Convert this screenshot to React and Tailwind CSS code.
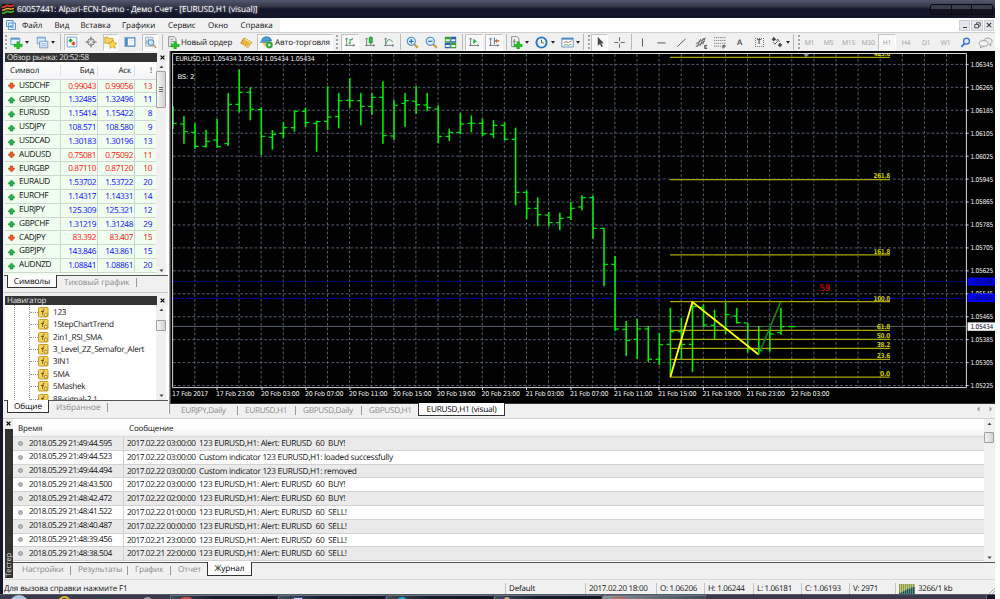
import React from "react";

const symbols = [
    ["USDCHF", "0.99043", "0.99056", "13", false],
    ["GBPUSD", "1.32485", "1.32496", "11", true],
    ["EURUSD", "1.15414", "1.15422", "8", true],
    ["USDJPY", "108.571", "108.580", "9", true],
    ["USDCAD", "1.30183", "1.30196", "13", true],
    ["AUDUSD", "0.75081", "0.75092", "11", false],
    ["EURGBP", "0.87110", "0.87120", "10", false],
    ["EURAUD", "1.53702", "1.53722", "20", true],
    ["EURCHF", "1.14317", "1.14331", "14", true],
    ["EURJPY", "125.309", "125.321", "12", true],
    ["GBPCHF", "1.31219", "1.31248", "29", true],
    ["CADJPY", "83.392", "83.407", "15", false],
    ["GBPJPY", "143.846", "143.861", "15", true],
    ["AUDNZD", "1.08841", "1.08861", "20", true],
];

const indicators = ["123", "1StepChartTrend", "2in1_RSI_SMA", "3_Level_ZZ_Semafor_Alert", "3IN1", "5MA", "5Mashek", "88-signal-2.1"];

const logs = [
    ["2018.05.29 21:49:44.595", "2017.02.22 03:00:00", "123 EURUSD,H1: Alert: EURUSD  60  BUY!"],
    ["2018.05.29 21:49:44.523", "2017.02.22 03:00:00", "Custom indicator 123 EURUSD,H1: loaded successfully"],
    ["2018.05.29 21:49:44.494", "2017.02.22 03:00:00", "Custom indicator 123 EURUSD,H1: removed"],
    ["2018.05.29 21:48:43.500", "2017.02.22 03:00:00", "123 EURUSD,H1: Alert: EURUSD  60  BUY!"],
    ["2018.05.29 21:48:42.472", "2017.02.22 02:00:00", "123 EURUSD,H1: Alert: EURUSD  60  BUY!"],
    ["2018.05.29 21:48:41.522", "2017.02.22 01:00:00", "123 EURUSD,H1: Alert: EURUSD  60  SELL!"],
    ["2018.05.29 21:48:40.487", "2017.02.22 00:00:00", "123 EURUSD,H1: Alert: EURUSD  60  SELL!"],
    ["2018.05.29 21:48:39.456", "2017.02.21 23:00:00", "123 EURUSD,H1: Alert: EURUSD  60  SELL!"],
    ["2018.05.29 21:48:38.504", "2017.02.21 22:00:00", "123 EURUSD,H1: Alert: EURUSD  60  SELL!"],
];

// high, low, open, close in thirds of a pixel below y=50
const bars = [
    [168, 237, null, 220], [198, 281, 222, 245], [220, 296, 247, 289], [239, 293, 289, 274], [207, 293, 270, 290],
    [129, 288, 281, 163], [59, 187, 163, 127], [112, 211, 127, 178], [172, 315, 179, 259], [240, 299, 262, 253],
    [217, 265, 250, 233], [182, 245, 233, 184], [174, 231, 184, 218], [212, 305, 220, 215], [109, 240, 214, 201],
    [129, 235, 200, 152], [84, 173, 151, 152], [129, 226, 152, 169], [129, 195, 169, 142], [94, 281, 142, 257],
    [150, 270, 258, 166], [129, 230, 160, 152], [108, 192, 154, 164], [129, 184, 165, 173], [166, 280, 177, 259],
    [236, 273, 259, 247], [189, 253, 247, 222], [196, 247, 220, 220], [206, 258, 220, 251], [210, 264, 253, 226],
    [217, 272, 226, 268], [233, 466, 268, 427], [421, 508, 427, 475], [442, 528, 475, 494], [486, 529, 495, 518],
    [488, 541, 518, 505], [455, 510, 502, 475], [436, 481, 471, 443], [437, 566, 443, 535], [534, 709, 535, 643],
    [618, 843, 643, 837], [813, 918, 838, 871], [807, 927, 868, 837], [828, 936, 837, 928], [849, 945, 928, 884],
    [773, 975, 883, 845], [803, 928, 845, 883], [763, 966, 883, 770], [763, 832, 772, 825], [779, 868, 826, 841],
    [757, 853, 841, 794], [774, 821, 798, 818], [818, 908, 819, 897], [828, 915, 897, 902], [830, 905, 896, 852],
    [774, 854, 848, 830], [829, 831, 830, 830],
];

const prices = ["1.06345", "1.06265", "1.06185", "1.06105", "1.06025", "1.05945", "1.05865", "1.05785", "1.05705", "1.05625", "1.05545", "1.05465", "1.05385", "1.05305", "1.05225"];

const times = [
    ["17 Feb 2017", 172], ["17 Feb 23:00", 216], ["20 Feb 03:00", 261], ["20 Feb 07:00", 305], ["20 Feb 11:00", 349],
    ["20 Feb 15:00", 393], ["20 Feb 19:00", 437], ["20 Feb 23:00", 481.5], ["21 Feb 03:00", 525.5], ["21 Feb 07:00", 570],
    ["21 Feb 11:00", 614], ["21 Feb 15:00", 658], ["21 Feb 19:00", 702.5], ["21 Feb 23:00", 746.5], ["22 Feb 03:00", 791],
];

const fibs = [
    ["423.6", 57.3], ["261.8", 179.6], ["161.8", 254.8], ["100.0", 301.7], ["61.8", 330.3],
    ["50.0", 339.4], ["38.2", 348.4], ["23.6", 359.4], ["0.0", 377.1],
];

const Chart = () => (
    <svg width="825" height="352" viewBox="170 51 825 352" className="block shrink-0" fontFamily="'DejaVu Sans', sans-serif">
        <rect x="170" y="51" width="825" height="352" fill="#000" />
        <g stroke="#66758a" strokeWidth="0.8" strokeDasharray="2.8 2">
            {prices.map((p, i) => <path key={p} d={`M173 ${64.4 + i * 22.94}H966`} />)}
            {Array.from({ length: 35 }, (_, i) => <path key={i} d={`M${194.8 + i * 22.11} 54V387`} />)}
        </g>
        <path d="M173 326.4H966" stroke="#56616e" />
        <path d="M173 281.5H966" stroke="#0000a8" strokeDasharray="5 2 1.5 2" />
        <path d="M173 298.4H966" stroke="#0000e0" strokeDasharray="7 2 2 2" />
        {/* OHLC bars */}
        <g stroke="#00f000" strokeWidth="1.6">
            {bars.map(([h, l, o, c], i) => {
                const x = 172.9 + i * 11.055;
                return (
                    <g key={i}>
                        <path d={`M${x} ${50 + h / 3}V${50 + l / 3}`} />
                        {o !== null && <path strokeWidth="1.2" d={`M${x - 3.8} ${50 + o / 3}H${x}`} />}
                        <path strokeWidth="1.2" d={`M${x} ${50 + c / 3}H${x + 3.8}`} />
                    </g>
                );
            })}
        </g>
        {/* fibo levels */}
        {fibs.map(([label, y]) => (
            <g key={label}>
                <path d={`M670 ${y}H890`} stroke="#a8a800" strokeWidth="1.2" />
                {label !== "423.6" && <text x="890" y={y - 1.2} textAnchor="end" fontSize="6.6" fontWeight="bold" fill="#c8c800" textLength={label.length * 3.3} lengthAdjust="spacingAndGlyphs">{label}</text>}
            </g>
        ))}
        <svg x="870" y="53.5" width="24" height="3.4">
            <text x="20" y="2.6" textAnchor="end" fontSize="6.6" fontWeight="bold" fill="#d0d000" textLength="16" lengthAdjust="spacingAndGlyphs">423.6</text>
        </svg>
        <path d="M670.3 377L692.4 302L758.6 354.5" fill="none" stroke="#ffff00" strokeWidth="1.9" />
        <path d="M758.6 354.5L780.6 302" stroke="#0a8a10" strokeWidth="1.7" />
        <text x="819.5" y="290.6" fontSize="9" fill="#e80000" textLength="10.5" lengthAdjust="spacingAndGlyphs">59</text>
        <path d="M803 53.5H809.5L806.2 57.5Z" fill="#7d92a8" />
        <path d="M172.6 387.6V53.5H966.4V387.6Z" fill="none" stroke="#d8d8d8" />
        <path d="M170.5 51V403" stroke="#4a4a4a" />
        <g fill="#f0f0f0" fontSize="6.6">
            <text x="175.5" y="61.2" textLength="139" lengthAdjust="spacingAndGlyphs">EURUSD,H1  1.05434 1.05434 1.05434 1.05434</text>
            <text x="177.5" y="79" textLength="16.5" lengthAdjust="spacingAndGlyphs">BS: 2</text>
            {prices.map((p, i) => (
                <g key={p}>
                    <path d={`M966 ${64.4 + i * 22.94}H968.6`} stroke="#d8d8d8" />
                    <text x="970.5" y={66.8 + i * 22.94} textLength="22.5" lengthAdjust="spacingAndGlyphs">{p}</text>
                </g>
            ))}
            {times.map(([t, x], i) => (
                <g key={t}>
                    {i > 0 && <path d={`M${x + 1} 387.5V390`} stroke="#d8d8d8" />}
                    <text x={x} y="396.2" textLength={i ? 38.3 : 36} lengthAdjust="spacingAndGlyphs">{t}</text>
                </g>
            ))}
        </g>
        <rect x="967.6" y="277.6" width="27.4" height="8" fill="#0000ff" />
        <rect x="967.6" y="293.4" width="27.4" height="8.6" fill="#0000ff" />
        <rect x="967.6" y="322.4" width="27.4" height="8.4" fill="#fff" />
        <g fontSize="6.6" fill="#000030">
            <text x="970.5" y="284" textLength="22.5" lengthAdjust="spacingAndGlyphs">1.05588</text>
            <text x="970.5" y="300.2" textLength="22.5" lengthAdjust="spacingAndGlyphs">1.05529</text>
            <text x="970.5" y="329" textLength="22.5" lengthAdjust="spacingAndGlyphs">1.05434</text>
        </g>
    </svg>
);

const Svg = ({ children, size = 13 }) => (
    <svg width={size} height={size} viewBox="0 0 16 16" fill="none" className="block shrink-0">{children}</svg>
);

const Plus = () => <path d="M8.5 7h3v3.200h3.500v3h-3.500v2.800h-3v-2.800h-3.500v-3h3.500z" fill="#22c822" stroke="#0d8a14" strokeWidth=".6" />;
const Axes = () => <path d="M3.5 3v10.5M1.5 12.5H14M12.5 11l1.8 1.5-1.8 1.5M2 4.5L3.5 2.6 5 4.5" stroke="#6f7478" strokeWidth="1.2" />;

const Tool = ({ className, on, children }) => (
    <div className={`flex shrink-0 items-center justify-center h-[17px] ${on ? "bg-[#f9f9f9] border border-[#c3c3c3] border-r-white border-b-white" : ""} ${className}`}>{children}</div>
);
const Caret = () => (
    <div className="w-[6px] shrink-0 flex justify-center"><svg width="4" height="3" viewBox="0 0 4 3"><path d="M0 0h4L2 2.8z" fill="#222" /></svg></div>
);
const Sep = ({ className }) => (
    <div className={`flex shrink-0 justify-center h-[16px] ${className}`}><div className="w-px bg-[#b9b9b9]" /></div>
);
const Grip = ({ className }) => (
    <div className={`flex shrink-0 justify-center h-[14px] ${className}`}><div className="border-l-2 border-dotted border-[#a5a5a5]" /></div>
);
const Frame = ({ className, children }) => <Tool className={`text-[6.8px] text-[#9c9c9c] ${className}`}>{children}</Tool>;

const Toolbar = () => (
    <div className="h-[19px] shrink-0 flex items-center bg-[#f0f0f0] border-t border-[#d0d0d0]">
        <Grip className="w-[5px]" />
        <Tool className="w-[16px]"><Svg><path d="M1 2.5h11v8H1z" fill="#e7f2fb" stroke="#5f93c4" /><path d="M1 3.5h11" stroke="#5f93c4" strokeWidth="2" /><Plus /></Svg></Tool>
        <Caret />
        <Tool className="w-[16px] ml-[4px]"><Svg><path d="M1.5 1.5h10v8h-10z" fill="#dcecfa" stroke="#5a8fc2" /><path d="M4.500 6.500h10v8h-10z" fill="#edf5fc" stroke="#5a8fc2" /><path d="M1.500 2.500h10M6 9.500h7M6 12h7" stroke="#7aa8d4" /></Svg></Tool>
        <Caret />
        <Sep className="w-[8px]" />
        <Tool on className="w-[15px]"><Svg size={12}><path d="M1.500 1.500h13v13h-13z" fill="#fff" stroke="#4b8bc8" /><path d="M3 6l3-3L9 6 6 9z" fill="#25a53a" /><path d="M7 10l3-3L13 10 10 13z" fill="#e04a28" /></Svg></Tool>
        <Tool className="w-[24px]"><Svg size={12}><circle cx="8" cy="8" r="4.5" stroke="#6c7074" strokeWidth="1.3" /><path d="M8 0.500v6M8 9.500v6M0.500 8h6M9.500 8h6" stroke="#6c7074" strokeWidth="1.300" /></Svg></Tool>
        <Tool on className="w-[15px]"><Svg><path d="M1 1.500h4l1 1.500h5v6H1z" fill="#f7d468" stroke="#d09a20" /><path d="M10.500 5l1.700 3.400 3.600.4-2.700 2.600.7 3.700-3.300-1.800-3.300 1.800.7-3.700-2.700-2.600 3.600-.4z" fill="#ffdc45" stroke="#c58a12" strokeWidth=".8" /></Svg></Tool>
        <Tool className="w-[24px]"><Svg size={12}><path d="M1.500 2.500h13v11h-13z" fill="#fff" stroke="#4486c8" strokeWidth="1.500" /><path d="M2 3h3v10H2z" fill="#3f83c6" /><path d="M7 6h6M7 8.500h6" stroke="#c7daec" /></Svg></Tool>
        <Tool on className="w-[16px]"><Svg><path d="M2 1.500h9v11H2z" fill="#eef3f8" stroke="#9aa8b5" /><path d="M3.500 5v5M5.500 3v4" stroke="#7c98b2" /><circle cx="8.500" cy="8" r="3.500" fill="#cfe6f8" stroke="#5f95c4" strokeWidth="1.300" /><path d="M11 10.500l4 4" stroke="#c89b4c" strokeWidth="2" /></Svg></Tool>
        <Sep className="w-[8px]" />
        <Tool className="w-[15px]"><Svg><path d="M2 .8h6.500L11 3v10H2z" fill="#f3f3f3" stroke="#777d82" /><path d="M4 4h4M4 6.500h5M4 9h3" stroke="#888" /><Plus /></Svg></Tool>
        <Tool className="w-[55px] justify-start text-[8px] tracking-[-0.1px]">Новый ордер</Tool>
        <Tool className="w-[20px]"><Svg size={13}><path d="M1 9L5 2.500l9.500 5.500-5 6.500z" fill="#e8b23c" stroke="#a87412" /><path d="M1.500 10l7.500 4 5-5.500" stroke="#fff2c0" /><path d="M5.500 3.500l7.500 4.500" stroke="#f9dc83" strokeWidth="2" /></Svg></Tool>
        <Tool on className="w-[76px] ml-px text-[8px] tracking-[-0.1px]">
            <Svg><path d="M2 6.500C2 2.500 5 1 8 1s6 1.500 6 5z" fill="#4b9bd8" stroke="#2e75b4" /><path d="M3 7c1.500 5 3 6 5 6s4-1.500 5-6z" fill="#f5c93f" /><path d="M0 7.500h13" stroke="#3c86c4" strokeWidth="1.500" /><circle cx="11.500" cy="11" r="4.200" fill="#29a83b" /><path d="M10.300 8.800v4.400l3.500-2.200z" fill="#fff" /></Svg>
            <span className="ml-[2px]">Авто-торговля</span>
        </Tool>
        <Grip className="w-[8px]" />
        <Tool on className="w-[18px]"><Svg size={12}><Axes /><path d="M8 4v7M8 9.500H6M8 5h3V2.500" stroke="#2f9a48" strokeWidth="1.300" /></Svg></Tool>
        <Tool className="w-[22px]"><Svg size={12}><Axes /><path d="M9 0v12" stroke="#178a2b" /><path d="M7 2h4v7H7z" fill="#27c13a" stroke="#178a2b" /></Svg></Tool>
        <Tool className="w-[16px]"><Svg size={12}><Axes /><path d="M4 10c2-6 5-7 9-2" stroke="#3ba755" strokeWidth="1.300" /></Svg></Tool>
        <Sep className="w-[6px]" />
        <Tool className="w-[18px]"><Svg><path d="M9.500 9.500l5 5" stroke="#cf9c3a" strokeWidth="2.600" /><circle cx="6.500" cy="6.500" r="5" fill="#dceefb" stroke="#4a8fd0" strokeWidth="1.400" /><path d="M3.800 6.500h5.400M6.500 3.800v5.400" stroke="#2b74bd" strokeWidth="1.500" /></Svg></Tool>
        <Tool className="w-[20px]"><Svg><path d="M9.500 9.500l5 5" stroke="#cf9c3a" strokeWidth="2.600" /><circle cx="6.500" cy="6.500" r="5" fill="#dceefb" stroke="#4a8fd0" strokeWidth="1.400" /><path d="M3.800 6.500h5.400" stroke="#2b74bd" strokeWidth="1.500" /></Svg></Tool>
        <Tool className="w-[19px]"><Svg><path d="M1 1h7v7H1zM8 8h7v7H8z" fill="#3aa02c" /><path d="M8 1h7v7H8zM1 8h7v7H1z" fill="#2c62b8" /><path d="M2 4h5v2.500H2zM9 4h5v2.500H9zM2 11h5v2.500H2zM9 11h5v2.500H9z" fill="#eaf6e5" /></Svg></Tool>
        <Sep className="w-[5px]" />
        <Tool on className="w-[18px]"><Svg size={12}><Axes /><path d="M7 3.500v7l5-3.500z" fill="#2eb348" /></Svg></Tool>
        <Tool on className="w-[18px] ml-[2px]"><Svg size={12}><Axes /><path d="M8.500 2v9" stroke="#3b76b5" strokeWidth="1.300" /><path d="M15 6.500h-5M12 4.500l-2 2 2 2" stroke="#d2542a" strokeWidth="1.400" /></Svg></Tool>
        <Sep className="w-[6px]" />
        <Tool className="w-[15px]"><Svg><path d="M2 .8h6.500L11 3v10H2z" fill="#f3f3f3" stroke="#777d82" /><path d="M6 4c-1 0-1 1-1 6M4 6.500h3" stroke="#555" /><Plus /></Svg></Tool>
        <Caret />
        <Tool className="w-[18px] ml-[2px]"><Svg><circle cx="8" cy="8" r="6.300" fill="#e9f4fc" stroke="#2d78c8" strokeWidth="2.400" /><path d="M8 4.500v4h3" stroke="#555" strokeWidth="1.100" /></Svg></Tool>
        <Caret />
        <Tool className="w-[16px] ml-[3px]"><Svg><path d="M1 2.500h14v11H1z" fill="#fff" stroke="#4c88c4" /><path d="M1 3.500h14" stroke="#4c88c4" strokeWidth="2" /><path d="M3 8.500l3-1.500 3 1 4-2" stroke="#c84a32" /><path d="M3 12l3-1.500 3 1 4-1.500" stroke="#33a04a" /></Svg></Tool>
        <Caret />
        <Sep className="w-[5px]" />
        <Grip className="w-[5px]" />
        <Tool on className="w-[17px]"><Svg size={12}><path d="M5 1v12l3-2.500 2 4 1.800-1-2-3.800H13z" fill="#4a4a4a" /></Svg></Tool>
        <Tool className="w-[22px]"><Svg><path d="M8 1.500v5M8 9.500v5M1.500 8h5M9.500 8h5" stroke="#666" strokeWidth="1.200" /></Svg></Tool>
        <Sep className="w-[3px]" />
        <Tool className="w-[18px]"><Svg><path d="M8 3v10" stroke="#555" strokeWidth="1.200" /></Svg></Tool>
        <Tool className="w-[21px]"><Svg><path d="M3 8.500h10" stroke="#555" strokeWidth="1.200" /></Svg></Tool>
        <Tool className="w-[19px]"><Svg><path d="M3 13L13 3.500" stroke="#555" strokeWidth="1.200" /></Svg></Tool>
        <Tool className="w-[20px]"><Svg><path d="M1 9.500L12 3M1 13L12 6.500M2.500 13.500L7 3.500M6 12.500l4.500-10M9.500 10.500L12.500 2" stroke="#5c5c5c" strokeWidth="1.100" /><path d="M15 11.500h-3v4h3M12 13.500h2.500" stroke="#333" /></Svg></Tool>
        <Tool className="w-[19px]"><Svg><path d="M0 2h14M0 5.500h14M0 9h14M0 12.500h9" stroke="#666" strokeDasharray="1.500 1" /><path d="M11 15.500v-4h2.500v2H11" stroke="#333" /></Svg></Tool>
        <Tool className="w-[19px] text-[8px] font-bold text-[#555] font-['Liberation_Sans']">A</Tool>
        <Tool className="w-[20px]">
            <div className="size-[9px] border border-dotted border-[#777] text-[7px] leading-[7px] font-bold text-[#555] text-center">T</div>
        </Tool>
        <Tool className="w-[16px]"><Svg size={12}><path d="M3.500 1L7 4.500 3.500 7 1 4.500zM12 9l3 3-3 3-3-3z" fill="#4a4a4a" /><path d="M3 8.500l2 2.500 4-4M7 6l2.500-1.500 1.500 3" stroke="#4a4a4a" strokeWidth="1.200" /></Svg></Tool>
        <Caret />
        <Sep className="w-[5px]" />
        <Grip className="w-[5px]" />
        <Frame className="w-[17px]">M1</Frame>
        <Frame className="w-[21px]">M5</Frame>
        <Frame className="w-[19px]">M15</Frame>
        <Frame className="w-[20px]">M30</Frame>
        <Tool on className="w-[18px] text-[6.8px] text-[#9c9c9c]">H1</Tool>
        <Frame className="w-[20px]">H4</Frame>
        <Frame className="w-[20px]">D1</Frame>
        <Frame className="w-[19px]">W1</Frame>
        <Tool className="w-[20px]"><Svg size={11}><circle cx="9.500" cy="6" r="4.200" fill="#eaf3ff" stroke="#3a74dc" strokeWidth="2" /><path d="M6.500 9.500L2 14.500" stroke="#3a74dc" strokeWidth="2.600" /></Svg></Tool>
        <Tool className="w-[20px]"><Svg size={15}><path d="M6 6.500c0-2 2-3.200 4.500-3.200s4.500 1.500 4.500 3.200-1 2.500-1.800 3l.5 2-2-1.500" fill="#ededed" stroke="#999" /><ellipse cx="6" cy="9" rx="4.800" ry="3" fill="#f4f4f4" stroke="#999" /><path d="M3 11.500l-.5 2.300L6 12" fill="#f4f4f4" stroke="#999" /></Svg></Tool>
    </div>
);

const CloseMark = () => (
    <svg width="5" height="5" viewBox="0 0 5 5" className="shrink-0"><path d="M.6.6l3.800 3.800M4.400.6L.6 4.400" stroke="#000" strokeWidth="1.200" /></svg>
);

const TitleStrip = ({ children }) => (
    <div className="h-[10px] shrink-0 flex items-center">
        <div className="w-[152px] h-[9px] ml-px bg-[#333] text-[#e0e0e0] text-[8px] leading-[9px] tracking-[-0.25px] pl-[2px] overflow-hidden">{children}</div>
        <div className="ml-[3px]"><CloseMark /></div>
    </div>
);

const ScrollBar = ({ thumb, grip }) => (
    <div className="w-[10px] shrink-0 flex flex-col items-center bg-[#f0f0f0]">
        <svg width="5" height="9" viewBox="0 0 5 9" className="shrink-0"><path d="M.5 6h4L2.500 3.500z" fill="#444" /></svg>
        <div className={`w-[10px] shrink-0 rounded-[1px] border border-[#a0a0a0] bg-linear-to-r from-[#f5f5f5] to-[#d2d2d2] flex flex-col items-center justify-center gap-px ${thumb}`}>
            {grip && <><i className="w-[4px] h-px bg-[#666]" /><i className="w-[4px] h-px bg-[#666]" /><i className="w-[4px] h-px bg-[#666]" /></>}
        </div>
        <svg width="5" height="9" viewBox="0 0 5 9" className="shrink-0 mt-auto"><path d="M.5 3.500h4L2.500 6z" fill="#444" /></svg>
    </div>
);

const MarketWatch = () => (
    <div className="h-[240px] shrink-0 flex flex-col">
        <div className="pt-px"><TitleStrip>Обзор рынка: 20:52:58</TitleStrip></div>
        <div className="flex h-[213px] ml-px bg-white">
            <div className="w-[151px] h-full overflow-hidden flex flex-col">
                <div className="h-[17.6px] shrink-0 flex items-center pt-px bg-linear-to-b from-white to-[#f3f4f6] border-b border-[#d5d5d5] tracking-[-0.15px]">
                    <div className="w-[56px] pl-[5px] border-r border-[#e0e0e0]">Символ</div>
                    <div className="w-[37px] pr-[3px] text-right border-r border-[#e0e0e0]">Бид</div>
                    <div className="w-[37px] pr-[3px] text-right border-r border-[#e0e0e0]">Аск</div>
                    <div className="flex-1 pr-[4px] text-right">!</div>
                </div>
                {symbols.map(([name, bid, ask, spread, up]) => (
                    <div key={name} className={`h-[13.8px] shrink-0 flex leading-[14.5px] text-[8.3px] tracking-[-0.42px] bg-[#effeef] border-b border-[#cfd8cf] ${up ? "text-[#0c0cff]" : "text-[#ff1010]"}`}>
                        <div className="w-[56px] pl-[3px] flex items-center border-r border-[#cfd8cf] text-[#151515]">
                            <svg width="7" height="8" viewBox="0 0 8 8" className="mr-[4px] mt-px shrink-0">
                                {up
                                    ? <path d="M4 .5L7.500 4v1.200H5.700v2.300H2.300V5.200H.5V4z" fill="#25b04a" stroke="#128030" strokeWidth=".6" />
                                    : <path d="M2.500.5h3v2.300h2V4L4 7.500.5 4V2.800h2z" fill="#ea5b2c" stroke="#b03410" strokeWidth=".6" />}
                            </svg>
                            <span className="tracking-[-0.35px]">{name}</span>
                        </div>
                        <div className="w-[37px] pr-px text-right border-r border-[#cfd8cf]">{bid}</div>
                        <div className="w-[37px] pr-px text-right border-r border-[#cfd8cf]">{ask}</div>
                        <div className="flex-1 pr-[4px] text-right">{spread}</div>
                    </div>
                ))}
                <div className="flex-1 bg-[#effeef]" />
            </div>
            <ScrollBar thumb="h-[37px]" grip />
        </div>
        <PanelTabs active="Символы" other="Тиковый график" width="w-[50px]" />
    </div>
);

const PanelTabs = ({ active, other, width }) => (
    <div className="h-[14px] shrink-0 flex border-t border-[#555] text-[8.2px] leading-[13px]">
        <div className={`h-[13px] -mt-px ml-[3px] bg-white border border-t-0 border-[#333] text-center tracking-[-0.1px] text-black ${width}`}>{active}</div>
        <div className="ml-[7px] text-[#8a8a8a] tracking-[0px]">{other}</div>
        <div className="ml-[6px] mt-[2px] h-[9px] w-px bg-[#999]" />
    </div>
);

const Navigator = () => (
    <div className="h-[120px] shrink-0 flex flex-col pt-[2px]">
        <TitleStrip>Навигатор</TitleStrip>
        <div className="flex h-[95px] ml-px bg-white">
            <div className="w-[151px] h-full overflow-hidden flex">
                <div className="w-[10px] border-r border-dotted border-[#999]" />
                <div className="w-[15px] border-r border-dotted border-[#999]" />
                <div className="pt-px">
                    {indicators.map((name) => (
                        <div key={name} className="h-[12.45px] flex items-center text-[8.2px]">
                            <div className="w-[8px] border-t border-dotted border-[#999]" />
                            <svg width="11" height="11" viewBox="0 0 11 11" className="mr-[4px]">
                                <rect x=".5" y=".5" width="9.500" height="9.500" rx="1" fill="#f4d35e" stroke="#c69a2a" />
                                <path d="M6.500 2.200c-1.500-.3-1.500 1-2 5.500M3 4.500h3" fill="none" stroke="#6b4c06" strokeWidth=".9" />
                                <circle cx="7.800" cy="7.800" r="1.600" fill="#fff0a0" stroke="#8a6510" strokeWidth=".7" />
                            </svg>
                            {name}
                        </div>
                    ))}
                </div>
            </div>
            <ScrollBar thumb="h-[11px] mt-[6px]" />
        </div>
        <PanelTabs active="Общие" other="Избранное" width="w-[42px]" />
    </div>
);

const chartTabs = [["EURJPY,Daily", "w-[56px]"], ["EURUSD,H1", "w-[50px]"], ["GBPUSD,Daily", "w-[58px]"], ["GBPUSD,H1", "w-[49px]"]];

const ChartTabs = () => (
    <div className="h-[14px] flex bg-[#f0f0f0] border-t border-[#333] text-[8.2px] leading-[13px] text-[#8a8a8a] pl-[11px]">
        {chartTabs.map(([t, w], i) => (
            <div key={t} className="flex">
                <div className={w}>{t}</div>
                {i < 3 && <div className="mr-[7px] mt-[2px] h-[9px] w-px bg-[#999]" />}
            </div>
        ))}
        <div className="-mt-px h-[13px] w-[87px] bg-white border border-t-0 border-[#333] text-center tracking-[-0.2px] text-black">EURUSD,H1 (visual)</div>
        <svg width="20" height="8" viewBox="0 0 20 8" className="ml-auto mt-px"><path d="M4.500 1.500v5L2 4zM14.500 1.500v5L17 4z" fill="#999" /></svg>
    </div>
);

const testerTabs = [["Настройки", "w-[48px]"], ["Результаты", "w-[49px]"], ["График", "w-[35px]"], ["Отчет", "w-[29px]"]];

const Tester = () => (
    <div className="h-[163px] shrink-0 flex pt-[2px]">
        <div className="w-[10px] shrink-0 flex flex-col items-center border-t border-[#d0d0d0]">
            <div className="h-[10px] pt-[2px]"><CloseMark /></div>
            <div className="w-[8px] h-[149px] ml-px bg-[#333] flex items-end justify-center">
                <span className="[writing-mode:vertical-rl] rotate-180 text-[7.5px] leading-[8px] text-[#e0e0e0] tracking-[-0.1px] pt-px">Тестер</span>
            </div>
        </div>
        <div className="flex-1 flex flex-col border-t border-[#d0d0d0]">
            <div className="h-[143px] shrink-0 flex bg-white">
                <div className="flex-1 overflow-hidden">
                    <div className="h-[18px] flex items-center pt-[2px] bg-linear-to-b from-white via-white to-[#f0f2f5] border-b border-[#dcdcdc]">
                        <div className="w-[111px] pl-[5px] tracking-[-0.1px]">Время</div>
                        <div className="pl-[5px] tracking-[-0.15px]">Сообщение</div>
                    </div>
                    {logs.map(([time, at, msg], i) => (
                        <div key={time} className={`h-[13.8px] flex leading-[13.8px] text-[8.3px] text-[#151515] whitespace-pre border-b border-[#d2d2d2] ${i % 2 ? "bg-white" : "bg-[#eaeaea]"}`}>
                            <div className="w-[111px] pl-[5px] flex items-center border-r border-[#cfcfcf] tracking-[-0.47px]">
                                <svg width="5" height="5" viewBox="0 0 5 5" className="mr-[6px]"><circle cx="2.500" cy="2.500" r="2" fill="#bbb" stroke="#888" strokeWidth=".8" /></svg>
                                {time}
                            </div>
                            <div className="w-[72px] pl-[3px] tracking-[-0.46px]">{at}</div>
                            <div className="pl-[3px] tracking-[-0.3px]">{msg}</div>
                        </div>
                    ))}
                </div>
                <ScrollBar thumb="h-[11px] mt-[4px]" />
                <div className="w-px bg-[#f0f0f0]" />
            </div>
            <div className="h-[16px] flex border-t border-[#555] text-[8.2px] leading-[14.5px] text-[#8a8a8a] pl-[9px]">
                {testerTabs.map(([t, w], i) => (
                    <div key={t} className="flex">
                        <div className={`tracking-[-0.15px] ${w}`}>{t}</div>
                        {i < 3 && <div className="mr-[7px] mt-[3px] h-[9px] w-px bg-[#999]" />}
                    </div>
                ))}
                <div className="-mt-px h-[14px] w-[45px] bg-white border border-t-0 border-[#333] text-center tracking-[-0.1px] text-black">Журнал</div>
            </div>
        </div>
    </div>
);

const Cell = ({ className, children }) => (
    <div className={`h-[11px] shrink-0 border-l border-[#c4c4c4] pl-[3px] flex items-center ${className}`}>{children}</div>
);

const StatusBar = () => (
    <div className="h-[15px] shrink-0 flex items-end bg-[#f0f0f0] border-t border-[#d8d8d8]">
        <div className="w-[502px] shrink-0 pl-px h-[11px] flex items-center tracking-[-0.1px]">Для вызова справки нажмите F1</div>
        <Cell className="w-[80px] tracking-[-0.15px]">Default</Cell>
        <Cell className="w-[71px]">2017.02.20 18:00</Cell>
        <Cell className="w-[48px]">O: 1.06206</Cell>
        <Cell className="w-[49px]">H: 1.06244</Cell>
        <Cell className="w-[48px]">L: 1.06181</Cell>
        <Cell className="w-[48px]">C: 1.06193</Cell>
        <Cell className="w-[46px]">V: 2971</Cell>
        <Cell className="flex-1">
            <svg width="16" height="10" viewBox="0 0 16 10" className="mr-[3px]">
                <path d="M.8 0v10M2.800 0v10M4.800 0v10M6.800 0v10M8.800 0v10M10.800 0v10M12.800 0v10M14.800 0v10" stroke="#7c8c1c" strokeWidth="1.300" />
                <path d="M.8 9v1M2.800 8v2M4.800 7v3M6.800 6v4M8.800 5v5M10.800 4.500v5.500M12.800 3.500v6.500M14.800 3v7" stroke="#0e4c66" strokeWidth="1.400" />
            </svg>
            3266/1 kb
            <svg width="6" height="6" viewBox="0 0 6 6" className="ml-auto mt-[4px]"><path d="M0 6l6-6M3 6l3-3" stroke="#aaa" /></svg>
        </Cell>
    </div>
);

const TaskButton = ({ className, icon, lit }) => (
    <div className={`shrink-0 h-[12px] border-l border-t border-[#6a707c] rounded-tl-[2px] bg-linear-to-r ${lit ? "from-[#8a929a] to-[#414c56]" : "from-[#3c4b58] via-[#16202c] via-40% to-[#121722]"} ${className}`}>
        <div className={`h-[9px] ml-[9px] mt-px ${icon}`} />
    </div>
);

const Taskbar = () => (
    <div className="flex-1 flex bg-[#393b4b] border-t border-[#565969] overflow-hidden">
        <div className="shrink-0 size-[20px] ml-[9px] rounded-full bg-[#a9c8da]" />
        <div className="shrink-0 w-[13px] h-[10px] ml-[29px] mt-px rounded-t-full border-2 border-[#e0b52c]" />
        <div className="shrink-0 w-[9px] h-[6px] ml-[25px] mt-[3px] bg-[#2c4a38]" />
        <div className="shrink-0 w-[9px] h-[9px] ml-[38px] mt-[2px] rounded-full bg-[#9a9ca6]" />
        <TaskButton className="w-[107px] ml-[18px]" icon="w-[13px] rounded-full bg-[#c9503e]" />
        <TaskButton className="w-[107px] ml-px" icon="w-[10px] translate-x-[5px] bg-[#cfd6ea] border border-[#3a4aa0]" />
        <TaskButton className="w-[107px] ml-px" icon="w-[12px] rounded-t-full bg-[#18a8e0]" />
        <TaskButton className="w-[107px] ml-px" icon="w-[6px] rounded-full bg-[#c8b090]" />
        <TaskButton lit className="w-[104px] ml-px" icon="w-[14px] rounded-full border border-[#d8583a]" />
        <div className="ml-auto w-[9px] bg-[#14162a] border-l border-[#666a7a]" />
    </div>
);

const menu = [["Файл", "w-[32.5px]"], ["Вид", "w-[26px]"], ["Вставка", "w-[41.5px]"], ["Графики", "w-[46px]"], ["Сервис", "w-[40px]"], ["Окно", "w-[32.5px]"], ["Справка", ""]];

export default function App() {
    return (
        <div className="w-[1000px] h-[599px] bg-white overflow-hidden whitespace-nowrap font-['Open_Sans',sans-serif] text-[8px] leading-[11px] tracking-[-0.3px] text-[#151515] [text-rendering:geometricPrecision]">
            <div className="w-[995px] h-full flex flex-col bg-[#14172a]">
                {/* Title bar */}
                <div className="h-[18px] shrink-0 flex items-center bg-linear-to-b from-[#50546c] from-5% via-[#363948] via-35% to-[#14172a] to-50% text-white text-[8.300px] tracking-[-0.09px]">
                    <svg width="12" height="11" viewBox="0 0 12 11" className="ml-[2px] mr-[3px]">
                        <rect width="12" height="11" fill="#1b1408" />
                        <path d="M0 3c3 1 4-2 6-1.500S9 3 12 1" fill="none" stroke="#e03a22" strokeWidth="1.800" />
                        <path d="M0 6c3 1 4-2 6-1.500S9 6 12 4" fill="none" stroke="#e8a32c" strokeWidth="1.500" />
                        <path d="M0 9c3 1 4-2 6-1.500S9 9 12 7" fill="none" stroke="#3fae36" strokeWidth="1.800" />
                    </svg>
                    <span className="[text-shadow:0_0_3px_#aab]">60057441: Alpari-ECN-Demo - Демо Счет - [EURUSD,H1 (visual)]</span>
                    <div className="ml-auto mr-[2px] w-[63px] h-[11px] flex rounded-[2px] border border-[#0a0b14] bg-linear-to-b from-[#3a3d4b] from-45% to-[#12131f] to-50%">
                        <div className="w-[21px] border-r border-[#0c0d18]" />
                        <div className="w-[20px] border-r border-[#0c0d18]" />
                    </div>
                </div>
                <div className="h-[576px] shrink-0 ml-[3px] flex flex-col bg-[#f0f0f0]">
                    {/* Menu */}
                    <div className="h-[14px] shrink-0 flex bg-white">
                        <div className="w-[277px] h-full flex items-center bg-[#f1f1f1] tracking-[-0.05px]">
                            <svg width="10" height="10" viewBox="0 0 10 10" className="ml-[3px] mr-[6px]">
                                <path d="M.5.5h6.500v6H.5zM2.500 3h7v6.500h-7z" fill="#e3effa" stroke="#5a9ad6" />
                                <path d="M4 5.500h4M4 7.500h4" stroke="#8fb9df" />
                            </svg>
                            {menu.map(([label, w]) => <div key={label} className={w}>{label}</div>)}
                        </div>
                        <div className="ml-auto flex items-center gap-px pr-px">
                            <div className="w-[11px] h-[11px] bg-[#e4e6ea] border border-[#ccd0d6] flex items-end justify-center pb-[2px]"><div className="w-[4px] h-px bg-[#444]" /></div>
                            <div className="w-[12px] h-[11px] bg-[#e4e6ea] border border-[#ccd0d6] flex items-center justify-center">
                                <svg width="7" height="7" viewBox="0 0 7 7"><path d="M2.500 2V.8h3.700v3.400H5M.8 2.500h3.700v3.400H.8z" fill="none" stroke="#444" strokeWidth=".9" /></svg>
                            </div>
                            <div className="w-[10px] h-[11px] bg-[#e4e6ea] border border-[#ccd0d6] flex items-center justify-center">
                                <svg width="6" height="6" viewBox="0 0 6 6"><path d="M.8.8l4.400 4.400M5.200.8L.8 5.200" stroke="#444" strokeWidth="1.200" /></svg>
                            </div>
                        </div>
                    </div>
                    <Toolbar />
                    <div className="h-[365px] shrink-0 flex">
                        <div className="w-[165px] shrink-0 flex flex-col pl-px">
                            <MarketWatch />
                            <div className="h-[2px] border-b border-[#c8c8c8]" />
                            <Navigator />
                        </div>
                        <div className="w-[2px] shrink-0 h-[363px] bg-white border-r border-[#999]" />
                        <div className="w-[825px] shrink-0">
                            <Chart />
                            <ChartTabs />
                        </div>
                    </div>
                    <Tester />
                    <StatusBar />
                </div>
                <Taskbar />
            </div>
        </div>
    );
}
